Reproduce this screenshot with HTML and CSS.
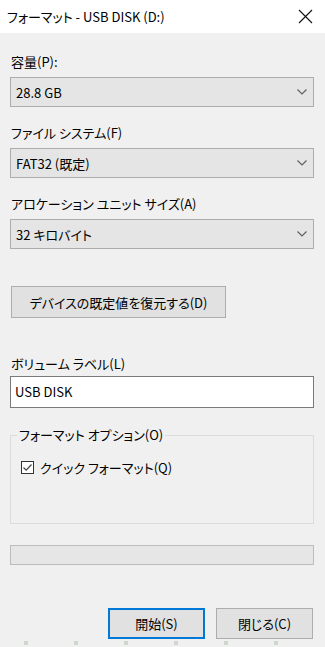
FILE: index.html
```html
<!DOCTYPE html>
<html lang="ja">
<head>
    <meta charset="UTF-8">
    <meta name="viewport" content="width=device-width, initial-scale=1.0">
    <title>フォーマット - USB DISK (D:)</title>
    <link rel="stylesheet" href="styles.css">
</head>
<body>
    <div class="window">
        <div class="titlebar">
            <span class="title">フォーマット - USB DISK (D:)</span>
            <svg class="close" width="15" height="15" viewBox="0 0 15 15">
                <path d="M1 1 L14 14 M14 1 L1 14" stroke="#111" stroke-width="1.1" fill="none"/>
            </svg>
        </div>

        <div class="content">
            <div class="label first">容量(P):</div>
            <div class="select">
                <span>28.8 GB</span>
                <svg class="chevron" width="10" height="6" viewBox="0 0 10 6"><path d="M0.5 0.5 L5 5 L9.5 0.5" stroke="#606060" stroke-width="1.2" fill="none"/></svg>
            </div>

            <div class="label">ファイル システム(F)</div>
            <div class="select">
                <span>FAT32 (既定)</span>
                <svg class="chevron" width="10" height="6" viewBox="0 0 10 6"><path d="M0.5 0.5 L5 5 L9.5 0.5" stroke="#606060" stroke-width="1.2" fill="none"/></svg>
            </div>

            <div class="label">アロケーション ユニット サイズ(A)</div>
            <div class="select">
                <span>32 キロバイト</span>
                <svg class="chevron" width="10" height="6" viewBox="0 0 10 6"><path d="M0.5 0.5 L5 5 L9.5 0.5" stroke="#606060" stroke-width="1.2" fill="none"/></svg>
            </div>

            <button class="btn restore">デバイスの既定値を復元する(D)</button>

            <div class="label volume">ボリューム ラベル(L)</div>
            <div class="textbox">USB DISK</div>

            <fieldset class="options">
                <legend>フォーマット オプション(O)</legend>
                <div class="check-row">
                    <span class="checkbox">
                        <svg width="11" height="11" viewBox="0 0 11 11"><path d="M1.5 5.5 L4.2 8.2 L9.5 2.5" stroke="#444" stroke-width="1.2" fill="none"/></svg>
                    </span>
                    <span>クイック フォーマット(Q)</span>
                </div>
            </fieldset>

            <div class="progress"></div>

            <div class="actions">
                <button class="btn default">開始(S)</button>
                <button class="btn">閉じる(C)</button>
            </div>

            <div class="marks">
                <span></span><span></span><span></span><span></span><span></span><span></span>
            </div>
        </div>
    </div>
</body>
</html>
```

FILE: styles.css
```css
html, body {
    margin: 0;
    padding: 0;
}
body {
    font-family: "Noto Sans CJK JP", "Noto Sans", sans-serif;
    font-size: 13px;
    font-feature-settings: "palt";
    color: #000;
    background-color: #f0f0f0;
}
.window {
    width: 325px;
    height: 647px;
    overflow: hidden;
}
.titlebar {
    height: 33px;
    background-color: #fff;
    display: flex;
    align-items: center;
    justify-content: space-between;
    padding: 0 12px 0 7px;
}
.title {
    font-size: 13px;
    color: #000;
}
.close {
    display: block;
}
.content {
    padding: 0 11px 0 10px;
    display: flex;
    flex-direction: column;
}
.label {
    height: 16px;
    line-height: 16px;
    margin-top: 18px;
    padding-left: 1px;
}
.label.first {
    margin-top: 21px;
}
.select {
    margin-top: 7px;
    height: 28px;
    background-color: #e5e5e5;
    border: 1px solid #adadad;
    display: flex;
    align-items: center;
    justify-content: space-between;
    padding: 0 6px 0 5px;
}
.chevron {
    display: block;
}
.btn {
    font-family: inherit;
    font-size: 13px;
    font-feature-settings: "palt";
    color: #000;
    background-color: #e1e1e1;
    border: 1px solid #adadad;
    height: 32px;
    padding: 0;
    margin: 0;
}
.restore {
    margin-top: 37px;
    margin-left: 1px;
    width: 215px;
}
.label.volume {
    margin-top: 38px;
}
.textbox {
    margin-top: 4px;
    height: 30px;
    line-height: 30px;
    background-color: #fff;
    border: 1px solid #7a7a7a;
    padding-left: 4px;
}
.options {
    margin: 19px 0 0 0;
    border: 1px solid #dcdcdc;
    padding: 0 6px;
    height: 95px;
}
.options legend {
    padding: 0 2px;
    line-height: 16px;
}
.check-row {
    display: flex;
    align-items: center;
    gap: 6px;
    margin-top: 16px;
    margin-left: 4px;
    height: 16px;
}
.checkbox {
    width: 11px;
    height: 11px;
    border: 1px solid #333;
    background-color: #fff;
    display: flex;
}
.progress {
    margin-top: 21px;
    height: 18px;
    background-color: #e6e6e6;
    border: 1px solid #bcbcbc;
}
.actions {
    margin-top: 43px;
    display: flex;
    justify-content: flex-end;
    gap: 11px;
    padding-right: 1px;
}
.actions .btn {
    width: 97px;
    height: 31px;
}
.btn.default {
    border: 2px solid #0078d7;
}
.marks {
    display: flex;
    gap: 46px;
    padding-left: 14px;
    margin-top: 2px;
}
.marks span {
    width: 4px;
    height: 4px;
    background-color: #cfd8cf;
}
```
